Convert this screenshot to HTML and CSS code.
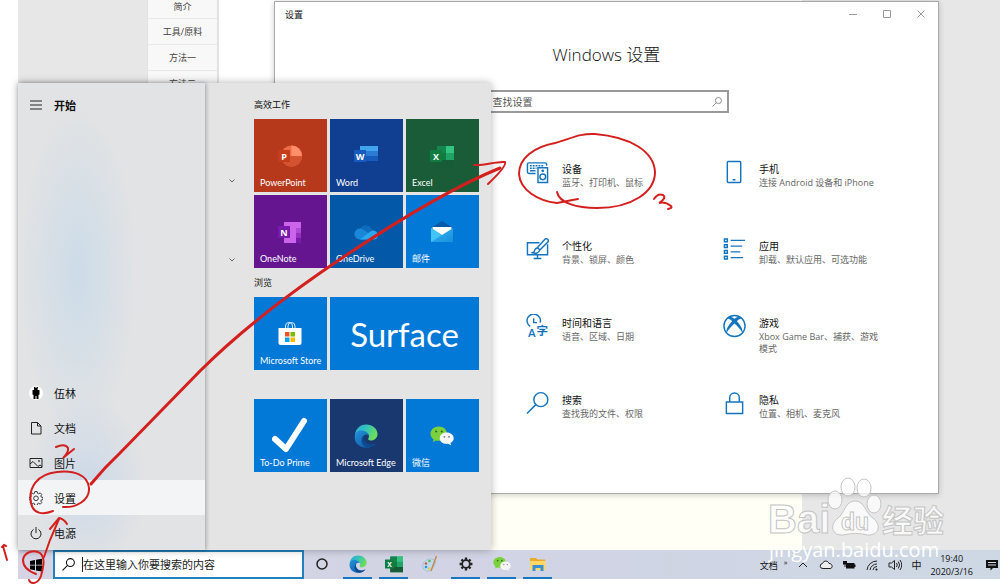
FILE: index.html
```
<!DOCTYPE html>
<html lang="zh-CN">
<head>
    <meta charset="UTF-8">
    <meta name="viewport" content="width=device-width, initial-scale=1.0">
    <title>Windows 设置</title>
    <link rel="stylesheet" href="styles.css">
</head>
<body>
    <svg class="defs" aria-hidden="true">
        <defs>
            <linearGradient id="edgeTop" x1="0" y1="0" x2="1" y2="0.4">
                <stop offset="0" stop-color="#2aa9dc"/>
                <stop offset="0.5" stop-color="#34c3bd"/>
                <stop offset="1" stop-color="#6bdc5c"/>
            </linearGradient>
            <linearGradient id="edgeLow" x1="0" y1="0" x2="1" y2="1">
                <stop offset="0" stop-color="#2394dc"/>
                <stop offset="1" stop-color="#0c4f9c"/>
            </linearGradient>
            <linearGradient id="mailFront" x1="0" y1="0" x2="1" y2="1">
                <stop offset="0" stop-color="#35b8f1"/>
                <stop offset="1" stop-color="#1a8fdc"/>
            </linearGradient>
        </defs>
        <symbol id="edge" viewBox="0 0 24 24">
            <path d="M1 12C1 5 6 0.500 12 0.500C19 0.500 23.500 5 23.500 10C23.500 14 20.500 16.500 17 16.500C14.500 16.500 13.500 15.500 14.500 14C15.500 12.500 15 9.500 12 8.500C8 7 3 8 1 12Z" fill="url(#edgeTop)"/>
            <path d="M0.700 13C1 8 4.500 6 8 6.500C11.500 7 14 8.500 14.500 11C12 9.500 9.500 11 9 13.500C8.500 18 13 21.500 18.500 20.500C20 20 21 19.500 22 19C20 22 16.500 23.800 12.500 23.800C6 23.800 0.500 19.500 0.700 13Z" fill="url(#edgeLow)"/>
            <path d="M9.500 11.500C8 15.500 11.500 20.500 17 20.700C19 20.700 21 20 22 19C20 22 17 23.500 13.500 23.700C7.500 22.500 5.500 15.500 9.500 11.500Z" fill="#0d4a94"/>
        </symbol>
        <symbol id="wechat" viewBox="0 0 24 20">
            <path d="M9 0.500C4 0.500 0.500 3.700 0.500 7.700C0.500 10 1.700 12 3.500 13.300L2.800 16L6 14.500C11.500 16 17 12.500 17 7.700C17 3.700 13.500 0.500 9 0.500Z" fill="#7ad13c"/>
            <circle cx="6.200" cy="5.500" r="1.100" fill="#2c6a1c"/>
            <circle cx="11.800" cy="5.500" r="1.100" fill="#2c6a1c"/>
            <path d="M16.700 6.500C12.500 6.500 9.700 9.200 9.700 12.300C9.700 16 13.500 18.500 18 17.800L21 19.300L20.500 17C22.500 16 23.700 14.300 23.700 12.300C23.700 9.200 20.700 6.500 16.700 6.500Z" fill="#f4f6f7"/>
            <circle cx="14.400" cy="10.800" r="0.900" fill="#777"/>
            <circle cx="19" cy="10.800" r="0.900" fill="#777"/>
        </symbol>
        <symbol id="gear" viewBox="0 0 24 24">
            <path d="M10 1h4l0.600 3 2 0.900 2.600-1.700 2.700 2.700-1.700 2.600 0.900 2 3 0.600v3.600l-3 0.600-0.900 2 1.700 2.600-2.700 2.700-2.600-1.700-2 0.900-0.600 3h-4l-0.600-3-2-0.900-2.600 1.700-2.700-2.700 1.700-2.600-0.900-2-3-0.600v-3.600l3-0.600 0.900-2-1.700-2.600 2.700-2.700 2.600 1.700 2-0.900z" fill="none" stroke="currentColor"/>
            <circle cx="12" cy="12.500" r="4" fill="none" stroke="currentColor"/>
        </symbol>
        <symbol id="cog" viewBox="0 0 24 24">
            <circle cx="12" cy="12" r="6.500" fill="none" stroke="currentColor" stroke-width="3"/>
            <path d="M12 1v4M12 19v4M1 12h4M19 12h4M4.200 4.200L7 7M17 17l2.800 2.800M4.200 19.800L7 17M17 7l2.800-2.800" fill="none" stroke="currentColor" stroke-width="4"/>
        </symbol>
        <symbol id="magnifier" viewBox="0 0 24 24">
            <circle cx="15.500" cy="8.500" r="7.300" fill="none" stroke="currentColor"/>
            <path d="M10.300 13.700L1 23" fill="none" stroke="currentColor"/>
        </symbol>
        <symbol id="excel" viewBox="0 0 24 24">
            <path d="M7 2h17v21H7z" fill="#21a366"/>
            <path d="M7 2h9v7H7z" fill="#158650"/>
            <path d="M16 2h8v7h-8z" fill="#33c481"/>
            <path d="M7 9h9v7H7z" fill="#107c41"/>
            <path d="M7 16h17v7H7z" fill="#185c37"/>
            <path d="M0 6h12v12H0z" fill="#107c41"/>
            <text x="6" y="15.500" class="badge-letter">X</text>
        </symbol>
    </svg>

    <main class="desktop">
        <div class="webpage">
            <nav class="steps">
                <a href="#">简介</a>
                <a href="#">工具/原料</a>
                <a href="#">方法一</a>
                <a href="#">方法二</a>
            </nav>
            <div class="article"></div>
        </div>

        <section class="settings">
            <header class="titlebar">
                <span>设置</span>
                <div class="window-buttons">
                    <button aria-label="最小化"><svg viewBox="0 0 10 10"><path d="M1 5.500h8"/></svg></button>
                    <button aria-label="最大化"><svg viewBox="0 0 10 10"><path d="M1.500 1.500h7v7h-7z"/></svg></button>
                    <button aria-label="关闭"><svg viewBox="0 0 10 10"><path d="M1.500 1.500l7 7M8.500 1.500l-7 7"/></svg></button>
                </div>
            </header>
            <h1>Windows 设置</h1>
            <label class="find">
                <input type="text" placeholder="查找设置" aria-label="查找设置">
                <svg><use href="#magnifier"/></svg>
            </label>
            <div class="categories">
                <a class="category" href="#">
                    <svg viewBox="0 0 24 24">
                        <path d="M10 13.500H3A1.500 1.500 0 0 1 1.500 12V4A1.500 1.500 0 0 1 3 2.500H20A1.500 1.500 0 0 1 21.500 4V5.500"/>
                        <path d="M4 5.500h15M4 8h7" stroke-dasharray="2 1"/><path d="M4 10.700h6"/>
                        <path d="M12.500 7.500h10v15.500h-10z"/><circle cx="17.500" cy="17" r="3"/><circle cx="17.500" cy="10.800" r="0.700"/>
                    </svg>
                    <span class="category-text"><strong>设备</strong><small>蓝牙、打印机、鼠标</small></span>
                </a>
                <a class="category" href="#">
                    <svg viewBox="0 0 24 24"><path d="M5.500 1h12a1 1 0 0 1 1 1v20a1 1 0 0 1-1 1h-12a1 1 0 0 1-1-1V2a1 1 0 0 1 1-1zM10 20h3"/></svg>
                    <span class="category-text"><strong>手机</strong><small>连接 Android 设备和 iPhone</small></span>
                </a>
                <a class="category" href="#">
                    <svg viewBox="0 0 24 24">
                        <path d="M14 5.500H1.500v12.500H22.500V7M12 18v4M8 22h8"/>
                        <path d="M20 1.500L12 10.500L14.500 13L23 4.500C24 2.500 22 0.500 20 1.500ZM12 11C9.500 11 9 13 8.500 15L6.500 16C10 17 13.500 16.500 14.300 13.200"/>
                    </svg>
                    <span class="category-text"><strong>个性化</strong><small>背景、锁屏、颜色</small></span>
                </a>
                <a class="category" href="#">
                    <svg viewBox="0 0 24 24"><path d="M1.500 1.500h3v3h-3zM1.500 7.500h3v3h-3zM1.500 13.500h3v3h-3zM1.500 19.500h3v3h-3zM8 3h15M8 9h12M8 15h10M8 21h13"/></svg>
                    <span class="category-text"><strong>应用</strong><small>卸载、默认应用、可选功能</small></span>
                </a>
                <a class="category" href="#">
                    <svg viewBox="0 0 24 24">
                        <path d="M4.500 12.500A7 7 0 1 1 14.800 8.500M8 4v4.500h3.500"/>
                        <text x="6" y="23" class="glyph">A</text><text x="17" y="21" class="glyph">字</text>
                    </svg>
                    <span class="category-text"><strong>时间和语言</strong><small>语音、区域、日期</small></span>
                </a>
                <a class="category" href="#">
                    <svg viewBox="0 0 24 24">
                        <circle cx="12" cy="12" r="11"/>
                        <path class="solid" d="M6 2.500C8 2 10 3 12 4.500C14 3 16 2 18 2.500L20 4C18 4 16 5.500 14.500 7C17.500 10 21 15 20.500 19.500C18.500 16 15 12 12 9.500C9 12 5.500 16 3.500 19.500C3 15 6.500 10 9.500 7C8 5.500 6 4 4 4Z"/>
                    </svg>
                    <span class="category-text"><strong>游戏</strong><small>Xbox Game Bar、捕获、游戏模式</small></span>
                </a>
                <a class="category" href="#">
                    <svg><use href="#magnifier"/></svg>
                    <span class="category-text"><strong>搜索</strong><small>查找我的文件、权限</small></span>
                </a>
                <a class="category" href="#">
                    <svg viewBox="0 0 24 24"><path d="M3.500 11h17v12h-17zM7 11V6.500a5 5 0 0 1 10 0V11"/></svg>
                    <span class="category-text"><strong>隐私</strong><small>位置、相机、麦克风</small></span>
                </a>
            </div>
        </section>

        <section class="start">
            <nav class="rail">
                <button class="rail-item rail-title">
                    <svg viewBox="0 0 14 14"><path d="M1 3h12M1 7h12M1 11h12"/></svg>开始
                </button>
                <button class="rail-item">
                    <svg viewBox="0 0 14 14"><circle class="avatar" cx="7" cy="7" r="7"/><path class="person" d="M5 1h1l1 1 1-1h1l-.5 3h2v4.500l-1 .500v4H7.500V10h-1v3h-2V9l-1-.500V4H5z"/></svg>伍林
                </button>
                <button class="rail-item">
                    <svg viewBox="0 0 14 14"><path d="M2.500 1.500h6l3.500 3.500v8h-9.500zM8.500 1.500V5H12"/></svg>文档
                </button>
                <button class="rail-item">
                    <svg viewBox="0 0 14 14"><path d="M1 2.500h12v9H1zM1 8l3-2.500 5 5 2-1.500 2 1.500"/><circle cx="10" cy="5" r="0.500"/></svg>图片
                </button>
                <button class="rail-item current">
                    <svg class="rail-gear"><use href="#gear"/></svg>设置
                </button>
                <button class="rail-item">
                    <svg viewBox="0 0 14 14"><path d="M4.500 3.500a5 5 0 1 0 5 0M7 1v6"/></svg>电源
                </button>
            </nav>
            <div class="app-list">
                <svg viewBox="0 0 6 4"><path d="M.5.500L3 3 5.500.500"/></svg>
                <svg viewBox="0 0 6 4"><path d="M.5.500L3 3 5.500.500"/></svg>
            </div>
            <div class="groups">
                <h2>高效工作</h2>
                <div class="tiles">
                    <button class="tile powerpoint">
                        <svg viewBox="0 0 24 24">
                            <circle cx="13.500" cy="12" r="10.500" fill="#ed6c47"/><path d="M13.500 1.500A10.500 10.500 0 0 1 24 12H13.500z" fill="#ff8f6b"/><path d="M3 12h21a10.500 10.500 0 0 1-21 0z" fill="#d35230"/>
                            <path d="M0 6h12v12H0z" fill="#c43e1c"/><text x="6" y="15.500" class="badge-letter">P</text>
                        </svg>PowerPoint
                    </button>
                    <button class="tile word">
                        <svg viewBox="0 0 24 24">
                            <path d="M6 2h18v6H6z" fill="#41a5ee"/><path d="M6 7h18v6H6z" fill="#2b7cd3"/><path d="M6 12h18v6H6z" fill="#185abd"/><path d="M6 17h18v6H6z" fill="#103f91"/>
                            <path d="M0 6h12v12H0z" fill="#185abd"/><text x="6" y="15.500" class="badge-letter">W</text>
                        </svg>Word
                    </button>
                    <button class="tile excel"><svg><use href="#excel"/></svg>Excel</button>
                    <button class="tile onenote">
                        <svg viewBox="0 0 24 24">
                            <path d="M6 2h17v21H6z" fill="#ca64ea"/><path d="M18 8h5v5h-5z" fill="#ae4bd5"/><path d="M18 13h5v5h-5z" fill="#9332bf"/><path d="M18 18h5v5h-5z" fill="#7719aa"/>
                            <path d="M0 6h12v12H0z" fill="#7719aa"/><text x="6" y="15.500" class="badge-letter">N</text>
                        </svg>OneNote
                    </button>
                    <button class="tile onedrive">
                        <svg viewBox="0 0 24 24">
                            <path d="M6 9C8 4 16 3.500 18 10L12 16H5z" fill="#0f6cbd"/>
                            <path d="M6 19.500a5.500 5.500 0 1 1 2-10.600L19 16l-7 3.500z" fill="#1b87d8"/>
                            <path d="M6 19.500L17 11c4-1.500 7 1.500 7 4.500 0 2.500-2 4-4 4z" fill="#2aa7ee"/>
                        </svg>OneDrive
                    </button>
                    <button class="tile mail">
                        <svg viewBox="0 0 24 24">
                            <path d="M1 8L12 1l11 7v6H1z" fill="#0a5aa8"/><path d="M2.500 7h19v9h-19z" fill="#fff"/>
                            <path d="M1 8l11 7 11-7v14H1z" fill="url(#mailFront)"/><path d="M1 22l11-7-11-7z" fill="#42c3f5"/>
                        </svg>邮件
                    </button>
                </div>
                <h2>浏览</h2>
                <div class="tiles">
                    <button class="tile">
                        <svg viewBox="0 0 24 24">
                            <path d="M7.500 7V4a3.500 3.500 0 0 1 7 0V7M10 7V4a3.500 3.500 0 0 1 7 0V7" fill="none" stroke="#d5eafa"/>
                            <path d="M.5 6h23v15q0 2-2 2h-19q-2 0-2-2z" fill="#fff"/>
                            <path d="M7 10h4.500v4.500H7z" fill="#f25022"/><path d="M12.500 10H17v4.500h-4.500z" fill="#7fba00"/><path d="M7 15.500h4.500V20H7z" fill="#00a4ef"/><path d="M12.500 15.500H17V20h-4.500z" fill="#ffb900"/>
                        </svg>Microsoft Store
                    </button>
                    <button class="tile wide">Surface</button>
                </div>
                <div class="tiles last">
                    <button class="tile">
                        <svg class="tick" viewBox="0 0 36 36"><path d="M3 22l11 10L32 4" fill="none" stroke="#fff" stroke-width="6" stroke-linecap="round" stroke-linejoin="round"/></svg>To-Do Prime
                    </button>
                    <button class="tile edge-tile"><svg><use href="#edge"/></svg>Microsoft Edge</button>
                    <button class="tile"><svg><use href="#wechat"/></svg>微信</button>
                </div>
            </div>
        </section>
    </main>

    <footer class="taskbar">
        <button class="start-button" aria-label="开始">
            <svg viewBox="0 0 14 14"><path d="M1 3l5-1v4.700H1zM7 1.800l6-1v5.900H7zM1 7.500h5v4.700l-5-1zM7 7.500h6v5.900l-6-1z"/></svg>
        </button>
        <label class="search">
            <svg><use href="#magnifier"/></svg>
            <input type="text" placeholder="在这里输入你要搜索的内容" aria-label="搜索">
        </label>
        <div class="apps">
            <button aria-label="Cortana"><svg viewBox="0 0 18 18"><circle cx="9" cy="9" r="5" fill="none" stroke="#222" stroke-width="1.500"/></svg></button>
            <button class="open" aria-label="Microsoft Edge"><svg><use href="#edge"/></svg></button>
            <button class="open" aria-label="Excel"><svg><use href="#excel"/></svg></button>
            <button aria-label="画图">
                <svg viewBox="0 0 18 18">
                    <path d="M2 9C4 4 11 2 14 6C16 10 11 12 10 15C7 18 0 15 2 9Z" fill="#b9dcef" stroke="#8badbf" stroke-width="0.500"/>
                    <circle cx="5" cy="8.500" r="1.300" fill="#d85a4a"/><circle cx="8.500" cy="6" r="1.300" fill="#65b255"/><circle cx="5" cy="12" r="1.300" fill="#3c8fd0"/><circle cx="8" cy="13.500" r="1.200" fill="#efc43c"/>
                    <path d="M15.500 1L10 16" stroke="#ca8a4e" stroke-width="1.500"/>
                </svg>
            </button>
            <button class="open" aria-label="设置"><svg class="cog"><use href="#cog"/></svg></button>
            <button class="open" aria-label="微信"><svg><use href="#wechat"/></svg></button>
            <button class="open" aria-label="文件资源管理器">
                <svg viewBox="0 0 18 18">
                    <path d="M1 3h6l1.500 1.500H16V15H1z" fill="#e8ab2c"/><path d="M1 6h15.500v9H1z" fill="#ffd765"/>
                    <path d="M3.500 16V10h11v6h-3v-3h-5v3z" fill="#3b8fd4"/>
                </svg>
            </button>
        </div>
        <div class="tray">
            <span class="toolbar-name">文档<sup>»</sup></span>
            <svg viewBox="0 0 14 14"><path d="M3 9l4-4 4 4"/></svg>
            <svg viewBox="0 0 14 14"><path d="M4 10.500a2.500 2.500 0 0 1-.500-5C5 2 9 2.500 10 5.500c4 0 4 5 1 5z" fill="#eee"/></svg>
            <svg viewBox="0 0 14 14"><path class="dark" d="M4 5h8.500v5.500H4zM12.500 6.500h1v2.500h-1zM1 3h4v3.500H1z"/><path d="M3 6v3"/></svg>
            <svg viewBox="0 0 14 14"><path d="M2 12A10 10 0 0 1 12 3M5 12a7 7 0 0 1 7-6M8 12a4 4 0 0 1 4-3.500"/><circle class="dark" cx="11.500" cy="11.500" r="1"/></svg>
            <svg viewBox="0 0 14 14"><path d="M1 5h2.500L6.500 2.500v9L3.500 9H1zM8.500 5q1.500 2 0 4M10.300 3.500q2.500 3.500 0 7M12 2q3.500 5 0 10"/></svg>
            <span class="ime">中</span>
            <time>19:40<br>2020/3/16</time>
            <svg viewBox="0 0 14 14"><path class="dark" d="M1 2h12v8H8l-2.500 2.500V10H1z"/><path d="M3 4.500h8M3 7h8" stroke="#d5dce7"/></svg>
        </div>
    </footer>

    <svg class="watermark" viewBox="0 0 180 86">
        <text x="0" y="56" class="brand">Bai</text>
        <text x="114" y="55" class="brand-cn">经验</text>
        <path d="M87 24C77 24 77 36 70 41C61 48 64 59 75 58C84 56 91 56 99 58C111 59 114 48 105 41C97 36 97 24 87 24Z"/>
        <ellipse cx="67" cy="23" rx="7" ry="9"/><ellipse cx="80" cy="10" rx="7" ry="9"/><ellipse cx="96" cy="11" rx="7" ry="9"/><ellipse cx="106" cy="27" rx="7" ry="9"/>
        <text x="73" y="53" class="brand-du">du</text>
        <text x="1" y="80" class="site">jingyan.baidu.com</text>
    </svg>

    <svg class="ink" aria-hidden="true">
        <path d="M2 547L4 545L6 546M3 546L7 560"/>
        <path d="M36 574C28 571 23 566 23 560C24 552 34 549 40 553C46 558 43 568 41 576C38 584 31 585 29 580"/>
        <path d="M44 557L50 540L59 519M50 529L59 518Q64 519 67 524"/>
        <path d="M56 447Q65 443 68 448Q69 452 63 458L74 449"/>
        <path d="M53 511C43 515 33 514 31 503C28 488 37 474 57 472C74 470 88 475 89 488C90 501 75 508 63 507"/>
        <path class="long" d="M91 484Q104 468 120 453L200 371C236 335 277 303 320 273C375 235 446 190 500 168"/>
        <path d="M474 165C484 166 496 161 505 162Q507 166 488 184"/>
        <path d="M557 192C559 203 577 208 597 208C632 208 655 192 655 172C654 151 630 137 595 134C580 133 570 139 555 143C534 147 519 158 519 174C520 190 538 201 557 203Q567 201 578 199"/>
        <path d="M654 199Q658 193 663 195Q667 198 659 203Q665 201 671 206Q673 208 668 209"/>
    </svg>
</body>
</html>
```
FILE: styles.css
```
* {
    box-sizing: border-box;
}
body {
    margin: 0;
    padding: 0 0 6px 18px;
    height: 100vh;
    display: flex;
    flex-direction: column;
    position: relative;
    overflow: hidden;
    background: #fff;
    color: #111;
    font-family: "Open Sans", "Noto Sans CJK SC", sans-serif;
    font-size: 9px;
}
button {
    border: 0;
    padding: 0;
    background: none;
    color: inherit;
    font: inherit;
    text-align: left;
}
input {
    border: 0;
    padding: 0;
    outline: 0;
    flex: 1;
    min-width: 0;
    background: none;
    font: inherit;
}
a {
    color: inherit;
    text-decoration: none;
}
.defs {
    position: absolute;
    width: 0;
    height: 0;
}

/* desktop and the page behind the windows */
.desktop {
    flex: 1;
    min-height: 0;
    position: relative;
    background: #e7e7e7;
}
.webpage {
    display: flex;
    height: 100%;
    padding: 0 198px 0 129px;
}
.steps {
    width: 72px;
    background: #f8f8f8;
    border: 1px solid #e2e2e2;
    border-width: 0 2px 0 1px;
    color: #444;
    text-align: center;
}
.steps a {
    display: block;
    height: 26px;
    line-height: 26px;
    border-bottom: 1px solid #e8e8e8;
}
.steps a:first-child {
    height: 19px;
    line-height: 13px;
}
.article {
    flex: 1;
    background: linear-gradient(#fff 60%, #fffff6 85%);
}

/* settings window */
.settings {
    position: absolute;
    top: 1px;
    right: 61px;
    bottom: 56px;
    left: 256px;
    background: #fff;
    border: 1px solid #aaa;
    box-shadow: 0 1px 6px rgba(0, 0, 0, 0.2);
}
.titlebar {
    display: flex;
    justify-content: space-between;
    align-items: center;
    height: 24px;
    padding: 0 12px 0 10px;
}
.window-buttons {
    display: flex;
    gap: 24px;
}
.window-buttons svg {
    display: block;
    width: 10px;
    height: 10px;
    fill: none;
    stroke: #999;
}
.settings h1 {
    margin: 17px 0 0;
    font-size: 17px;
    line-height: 24px;
    font-weight: 300;
    text-align: center;
}
.find {
    display: flex;
    align-items: center;
    width: 244px;
    height: 23px;
    margin: 23px auto 0;
    padding: 0 5px 0 6px;
    border: 2px solid #999;
    font-size: 10px;
}
.find input::placeholder {
    color: #555;
}
.find svg {
    width: 10px;
    height: 10px;
    color: #777;
    stroke-width: 2;
}
.categories {
    display: grid;
    grid-template-columns: repeat(2, 197px);
    grid-auto-rows: 77px;
    justify-content: end;
    margin: 47px 18px 0 0;
}
.category {
    display: flex;
    gap: 13px;
}
.category svg {
    flex: none;
    width: 23px;
    height: 24px;
    color: #1474be;
    fill: none;
    stroke: #1474be;
    stroke-width: 1.5;
}
.category svg .solid {
    fill: #1474be;
    stroke: none;
}
.category svg .glyph {
    font-size: 12px;
    font-weight: 600;
    fill: #1474be;
    stroke: none;
    text-anchor: middle;
}
.category-text {
    display: block;
    width: 122px;
}
.category strong {
    display: block;
    margin-top: 2px;
    font-size: 10px;
    line-height: 15px;
    font-weight: 400;
}
.category small {
    display: block;
    font-size: 9px;
    line-height: 12px;
    color: #666;
}

/* start menu */
.start {
    position: absolute;
    left: 0;
    bottom: 0;
    display: flex;
    width: 473px;
    height: 467px;
    background: #e4e4e4;
    box-shadow: 0 0 8px rgba(0, 0, 0, 0.3);
}
.rail {
    display: flex;
    flex-direction: column;
    width: 187px;
    padding-top: 4px;
    background:
        radial-gradient(ellipse 60px 170px at 60px 190px, rgba(190, 215, 235, 0.6), transparent),
        radial-gradient(ellipse 60px 90px at 70px 400px, rgba(190, 210, 235, 0.6), transparent),
        #e2e3e4;
    box-shadow: 1px 0 4px rgba(0, 0, 0, 0.3);
}
.rail-item {
    display: flex;
    align-items: center;
    gap: 11px;
    height: 35px;
    padding-left: 11px;
    font-size: 11px;
}
.rail-title {
    margin-bottom: auto;
    font-weight: 700;
}
.rail-item.current {
    background: #f2f4f5;
}
.rail-item svg {
    width: 14px;
    height: 14px;
    fill: none;
    stroke: #222;
}
.rail-item .rail-gear {
    color: #222;
    stroke-width: 1.5;
}
.rail-item .avatar {
    fill: #fff;
    stroke: none;
}
.rail-item .person {
    fill: #000;
    stroke: none;
}
.app-list {
    display: flex;
    flex-direction: column;
    gap: 75px;
    width: 49px;
    padding: 96px 0 0 24px;
}
.app-list svg {
    width: 6px;
    height: 4px;
    fill: none;
    stroke: #666;
}
.groups {
    padding-top: 7px;
}
.groups h2 {
    height: 29px;
    margin: 0;
    font-size: 9px;
    line-height: 29px;
    font-weight: 400;
}
.tiles {
    display: grid;
    grid-template-columns: repeat(3, 73px);
    grid-auto-rows: 73px;
    gap: 3px;
}
.tiles.last {
    margin-top: 29px;
}
.tile {
    display: flex;
    flex-direction: column;
    justify-content: flex-end;
    padding: 0 0 3px 6px;
    background: #0278d7;
    color: #fff;
    font-family: Lato, "Noto Sans CJK SC", sans-serif;
    font-size: 9px;
    line-height: 12px;
    white-space: nowrap;
}
.tile svg {
    width: 24px;
    height: 24px;
    margin: 0 0 9px 18px;
}
.tile .tick {
    width: 36px;
    height: 36px;
    margin: 0 0 4px 12px;
}
.tile.powerpoint { background: #b7391b; }
.tile.word { background: #103f91; }
.tile.excel { background: #1a5c37; }
.tile.onenote { background: #64158f; }
.tile.onedrive { background: #0359a8; }
.tile.edge-tile { background: #19386f; }
.tile.wide {
    grid-column: span 2;
    align-items: center;
    justify-content: center;
    padding: 0;
    font-size: 33px;
    line-height: 36px;
}
.badge-letter {
    font: 700 9px "Open Sans", sans-serif;
    fill: #fff;
    text-anchor: middle;
}

/* taskbar */
.taskbar {
    display: flex;
    height: 29px;
    background: linear-gradient(90deg, #d5d3e4, #d0d4e4 60%, #ced8e4);
}
.start-button {
    width: 35px;
    padding-left: 11px;
}
.start-button svg {
    display: block;
    width: 14px;
    height: 14px;
}
.search {
    display: flex;
    align-items: center;
    gap: 7px;
    width: 251px;
    padding: 0 7px;
    border: 2px solid #2381bd;
    background: #fff;
    font-size: 11px;
}
.search input::placeholder {
    color: #222;
}
.search input {
    border-left: 1px solid #222;
}
.search svg {
    width: 13px;
    height: 13px;
    stroke-width: 2;
}
.apps {
    display: flex;
    gap: 7px;
    margin-left: 3px;
}
.apps button {
    display: flex;
    align-items: center;
    justify-content: center;
    width: 29px;
    border-bottom: 2px solid transparent;
}
.apps .open {
    border-bottom-color: #1976c0;
}
.apps svg {
    width: 18px;
    height: 18px;
}
.apps .cog {
    width: 14px;
    height: 14px;
    color: #222;
}
.tray {
    display: flex;
    align-items: center;
    gap: 9px;
    margin-left: auto;
    padding-right: 1px;
}
.tray svg {
    width: 14px;
    height: 14px;
    fill: none;
    stroke: #222;
}
.tray .dark {
    fill: #111;
    stroke: none;
}
.toolbar-name sup {
    margin-left: 6px;
}
.ime {
    font-size: 10px;
}
.tray time {
    margin-right: 3px;
    line-height: 13px;
    text-align: center;
}

/* overlays */
.watermark {
    position: absolute;
    right: 52px;
    bottom: 22px;
    width: 180px;
    height: 86px;
    fill: rgba(255, 255, 255, 0.75);
    stroke: #c4c4c4;
}
.brand {
    font: 700 40px "Liberation Sans", sans-serif;
}
.brand-cn {
    font: 700 31px "Noto Sans CJK SC", sans-serif;
}
.brand-du {
    font: 700 23px "Liberation Sans", sans-serif;
}
.site {
    font: 400 20px "Open Sans", sans-serif;
    stroke: none;
    fill: #fff;
}
.ink {
    position: absolute;
    top: 0;
    left: 0;
    width: 100%;
    height: 100%;
    fill: none;
    stroke: #d3201f;
    stroke-width: 2;
    stroke-linecap: round;
    pointer-events: none;
}
.ink .long {
    stroke-width: 3;
}
```
